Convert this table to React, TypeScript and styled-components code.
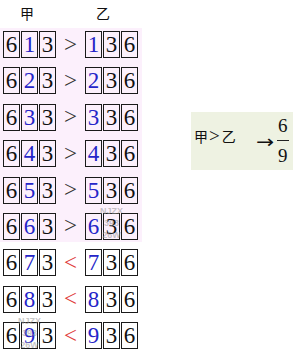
import styled, { createGlobalStyle } from 'styled-components';

const GlobalStyle = createGlobalStyle`
  html, body {
    margin: 0;
    padding: 0;
    background: #ffffff;
  }
  body {
    width: 296px;
    height: 358px;
    overflow: hidden;
    font-family: 'Liberation Serif', serif;
  }
`;

const Page = styled.div`
  display: flex;
  align-items: flex-start;
`;

const Left = styled.div`
  display: flex;
  flex-direction: column;
  width: 142px;
`;

const Header = styled.div`
  display: flex;
  align-items: center;
  height: 28px;
  padding-left: 20px;
  gap: 62px;
  font-family: 'Noto Sans CJK SC', sans-serif;
  font-size: 14px;
  color: #111;
  box-sizing: border-box;
  padding-bottom: 3px;
`;

const Pink = styled.div`
  display: flex;
  flex-direction: column;
  gap: 9.4px;
  padding: 3px 0 2px;
  background: #fcf0fc;
`;

const Plain = styled.div`
  display: flex;
  flex-direction: column;
  gap: 9.4px;
  margin-top: 7.4px;
`;

const Row = styled.div`
  display: flex;
  align-items: center;
  height: 27px;
  padding-left: 3px;
`;

const Group = styled.div`
  display: flex;
  gap: 1px;
`;

const Box = styled.span<{ $blue?: boolean }>`
  position: relative;
  width: 17px;
  height: 27px;
  box-sizing: border-box;
  border: 1px solid #1a1a1a;
  font-size: 23px;
  line-height: 26px;
  text-align: center;
  color: ${(p) => (p.$blue ? '#2525c8' : '#111111')};
`;

const Op = styled.span<{ $less?: boolean }>`
  width: 29px;
  text-align: center;
  font-size: 23px;
  line-height: 26px;
  color: ${(p) => (p.$less ? '#e03a3a' : '#333333')};
`;

const Mark = styled.span`
  position: absolute;
  left: 50%;
  top: 50%;
  transform: translate(-50%, -58%);
  display: flex;
  flex-direction: column;
  align-items: center;
  font-family: 'Liberation Sans', sans-serif;
  font-size: 9px;
  line-height: 12px;
  font-weight: bold;
  color: rgba(150, 150, 150, 0.55);
  pointer-events: none;
  white-space: nowrap;
`;

const Panel = styled.div`
  display: flex;
  align-items: center;
  margin: 112px 0 0 49px;
  width: 102px;
  height: 58px;
  background: #eef2e2;
  box-sizing: border-box;
  padding-left: 3px;
  color: #111;
`;

const Lhs = styled.span`
  display: flex;
  align-items: center;
  margin-bottom: 11px;
`;

const Han = styled.span`
  font-family: 'Noto Sans CJK SC', sans-serif;
  font-size: 14px;
`;

const Gt = styled.span`
  font-size: 19px;
  margin: 0 2px 0 1px;
`;

const Arrow = styled.span`
  display: inline-block;
  font-family: 'DejaVu Sans', sans-serif;
  font-size: 18px;
  margin: 1px 6px 0 20px;
  transform: scaleX(1.2);
  transform-origin: left center;
`;

const Frac = styled.span`
  display: flex;
  flex-direction: column;
  align-items: center;
  font-size: 19px;
  line-height: 20px;
`;

const Bar = styled.span`
  width: 12px;
  height: 1px;
  background: #222;
  margin: 4px 0 5px;
`;

const Watermark = () => (
  <Mark>
    <span>NJZX</span>
    <span>393</span>
    <span>26W</span>
  </Mark>
);

type RowData = { d: number; mark?: 'left' | 'right' };

const rows: RowData[] = [
  { d: 1 },
  { d: 2 },
  { d: 3 },
  { d: 4 },
  { d: 5 },
  { d: 6, mark: 'right' },
  { d: 7 },
  { d: 8 },
  { d: 9, mark: 'left' },
];

function CompareRow({ d, mark }: RowData) {
  const less = d > 6;
  return (
    <Row>
      <Group>
        <Box>6</Box>
        <Box $blue>
          {d}
          {mark === 'left' && <Watermark />}
        </Box>
        <Box>3</Box>
      </Group>
      <Op $less={less}>{less ? '<' : '>'}</Op>
      <Group>
        <Box $blue>{d}</Box>
        <Box>
          3{mark === 'right' && <Watermark />}
        </Box>
        <Box>6</Box>
      </Group>
    </Row>
  );
}

export default function App() {
  return (
    <>
      <GlobalStyle />
      <Page>
        <Left>
          <Header>
            <span>甲</span>
            <span>乙</span>
          </Header>
          <Pink>
            {rows.slice(0, 6).map((r) => (
              <CompareRow key={r.d} {...r} />
            ))}
          </Pink>
          <Plain>
            {rows.slice(6).map((r) => (
              <CompareRow key={r.d} {...r} />
            ))}
          </Plain>
        </Left>
        <Panel>
          <Lhs>
            <Han>甲</Han>
            <Gt>&gt;</Gt>
            <Han>乙</Han>
          </Lhs>
          <Arrow>→</Arrow>
          <Frac>
            <span>6</span>
            <Bar />
            <span>9</span>
          </Frac>
        </Panel>
      </Page>
    </>
  );
}
